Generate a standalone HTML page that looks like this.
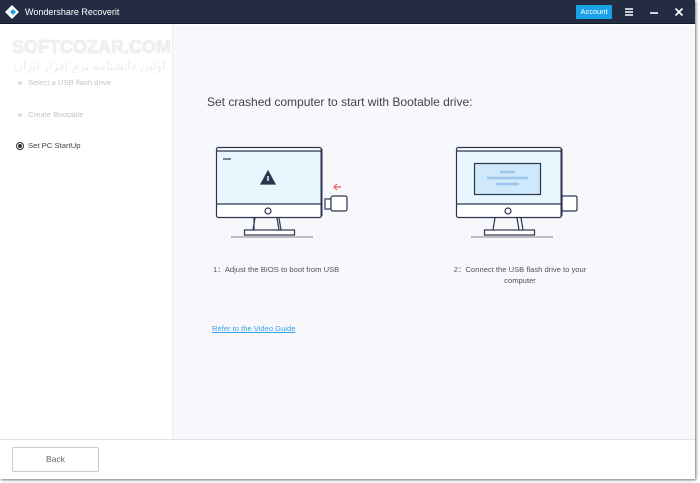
<!DOCTYPE html>
<html><head><meta charset="utf-8"><style>
*{margin:0;padding:0;box-sizing:border-box}
body{width:700px;height:483px;background:#fff;position:relative;overflow:hidden;font-family:"Liberation Sans",sans-serif}
.win{position:absolute;left:0;top:0;width:695px;height:479px;background:#fff;box-shadow:1px 1px 3px rgba(0,0,0,.55)}
.tb{position:absolute;left:0;top:0;width:695px;height:24px;background:#232c43;border-bottom:1px solid #11182a}
.tb .t{position:absolute;left:25px;top:7px;color:#fff;font-size:9px}
.acc{position:absolute;left:576px;top:5px;width:36px;height:14px;background:#1aa1e6;color:#fff;font-size:7.5px;text-align:center;line-height:14px;border-radius:1px}
.side{position:absolute;left:0;top:25px;width:172px;height:414px;background:#fff}
.main{position:absolute;left:172px;top:25px;width:523px;height:414px;background:#f7f7fc;border-left:1px solid #eceef4}
.foot{position:absolute;left:0;top:439px;width:695px;height:40px;border-top:1px solid #e2e3ea;background:#fff}
.back{position:absolute;left:12px;top:7px;width:87px;height:25px;border:1px solid #c9cad2;border-radius:2px;font-size:8.5px;color:#666;text-align:center;line-height:23px}
.s{position:absolute;font-size:7.7px;color:#c3c5cc}
.dot{position:absolute;width:4px;height:4px;border-radius:50%;background:#d6e2ee}
.wm{position:absolute;left:12px;top:37px;font-size:18px;font-weight:bold;color:#eef0f4;text-shadow:0 0 1px #ccc}
.wm2{position:absolute;left:14px;top:59px;font-size:12px;color:#eceef2;font-family:"DejaVu Sans",sans-serif}
</style></head><body>
<div class="win">
<div class="tb">
<svg style="position:absolute;left:4px;top:4px" width="16" height="16" viewBox="0 0 16 16"><path d="M8 1 L15 8 L11 12 L4 5Z" fill="#fff"/><path d="M4 5 L1 8 L8 15 L11 12Z" fill="#fff"/><path d="M9 5 L12 8 L9 11 L6 8Z" fill="#1aa1e6"/></svg>
<span class="t">Wondershare Recoverit</span>
<div class="acc">Account</div>
<svg style="position:absolute;left:624px;top:7px" width="10" height="10"><path d="M1 2H9M1 5H9M1 8H9" stroke="#fff" stroke-width="1.4"/></svg>
<svg style="position:absolute;left:649px;top:7px" width="10" height="10"><path d="M1 6H9" stroke="#fff" stroke-width="1.6"/></svg>
<svg style="position:absolute;left:674px;top:7px" width="10" height="10"><path d="M1.5 1.5L8.5 8.5M8.5 1.5L1.5 8.5" stroke="#fff" stroke-width="1.6"/></svg>
</div>
<div class="side">
<div class="dot" style="left:18px;top:56px"></div><div class="s" style="left:28px;top:53px">Select a USB flash drive</div>
<div class="dot" style="left:18px;top:88px"></div><div class="s" style="left:28px;top:85px">Create Bootable</div>
<div style="position:absolute;left:16px;top:117px;width:8px;height:8px;border:1px solid #333;border-radius:50%"><div style="width:4px;height:4px;margin:1px;background:#333;border-radius:50%"></div></div>
<div class="s" style="left:28px;top:116px;color:#444">Set PC StartUp</div>
</div>
<div class="wm">SOFTCOZAR.COM</div>
<div class="wm2">اولین دانشنامه نرم افزار ایران</div>
<div class="main">
<div style="position:absolute;left:34px;top:70px;font-size:12px;color:#444">Set crashed computer to start with Bootable drive:</div>
<svg style="position:absolute;left:0;top:0" width="523" height="414" viewBox="172 25 523 414">
<g fill="none" stroke="#2c3550" stroke-width="1.2">
<g>
<rect x="215.5" y="147.5" width="105" height="70" rx="2" fill="#fff"/>
<rect x="216.5" y="151" width="103" height="53" fill="#e8f6fd" stroke="none"/>
<path d="M216 151H320M216 204H320"/>
<path d="M320.5 149V216" stroke-width="2"/>
<circle cx="267" cy="211" r="3" fill="#fff"/>
<path d="M254 218L252 230M276 218L278 230M253 218V230M278 218L280 230"/>
<rect x="243.5" y="230" width="50" height="5" fill="#fff"/>
<path d="M230 237H312" stroke="#999"/>
<path d="M222 159H230"/>
<path d="M267 171L274 184H260Z" fill="#2c3550"/>
<path d="M267 176V181" stroke="#fff" stroke-width="1.4"/>
<rect x="324" y="199" width="6" height="10" fill="#fff"/>
<rect x="330" y="196" width="16" height="15" rx="2" fill="#fff"/>
<path d="M334 187H340" stroke="#ef5a4a"/>
<path d="M336 184L333 187L336 190" stroke="#ef5a4a"/>
</g>
<g>
<rect x="455.5" y="147.5" width="105" height="70" rx="2" fill="#fff"/>
<rect x="456.5" y="151" width="103" height="53" fill="#e8f6fd" stroke="none"/>
<path d="M456 151H560M456 204H560"/>
<path d="M560.5 149V216" stroke-width="2"/>
<circle cx="507" cy="211" r="3" fill="#fff"/>
<path d="M494 218L492 230M516 218L518 230M520 218L522 230"/>
<rect x="483.5" y="230" width="50" height="5" fill="#fff"/>
<path d="M470 237H552" stroke="#999"/>
<rect x="473.5" y="163.5" width="66" height="31" fill="#cfe8fb"/>
<path d="M499 172H514M486 178H527M495 184H518" stroke="#9cc7ea" stroke-width="2.5"/>
<rect x="561" y="196" width="15" height="15" rx="1.5" fill="#fff"/>
</g>
</g>
</svg>
<div style="position:absolute;left:40px;top:239px;font-size:7.6px;color:#555">1：Adjust the BIOS to boot from USB</div>
<div style="position:absolute;left:272px;top:239px;width:150px;font-size:7.6px;color:#555;text-align:center;line-height:11px">2：Connect the USB flash drive to your computer</div>
<div style="position:absolute;left:39px;top:299px;font-size:7.6px;color:#3aa3e8;text-decoration:underline">Refer to the Video Guide</div>
</div>
<div class="foot"><div class="back">Back</div></div>
</div>
</body></html>
